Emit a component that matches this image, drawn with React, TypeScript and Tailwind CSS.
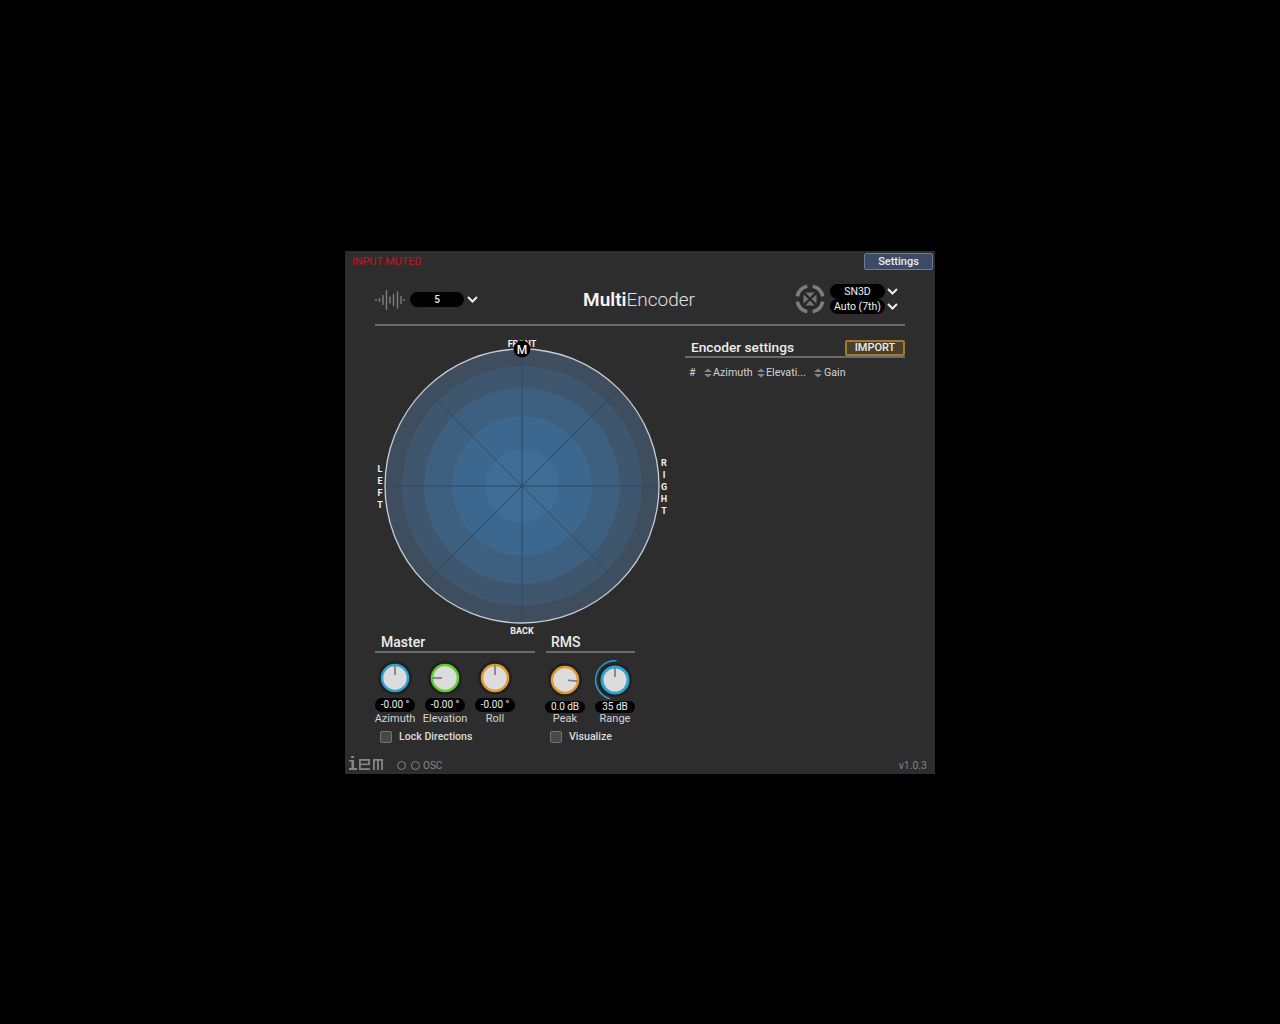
import React from "react";

function Chevron() {
  return (
    <svg width="11" height="7" viewBox="0 0 11 7" className="shrink-0">
      <path d="M1 1 L5.5 5.5 L10 1" fill="none" stroke="#ececec" strokeWidth="2" />
    </svg>
  );
}

function Knob({ color, angle, arc, stroke = 2.5 }: { color: string; angle: number; arc?: boolean; stroke?: number }) {
  const a = (angle * Math.PI) / 180;
  const s = Math.sin(a);
  const c = Math.cos(a);
  return (
    <svg width="40" height="40" viewBox="0 0 40 40" className="block">
      <circle cx="20" cy="20" r="16.8" fill="#202020" />
      {arc && <path d="M21.5 0.8 A19.3 19.3 0 0 0 15 38.7" fill="none" stroke="#2a9cc6" strokeWidth="1.5" />}
      <circle cx="20" cy="20" r="13" fill="#dcdcdc" stroke={color} strokeWidth={stroke} />
      <line x1={20 + s * 3} y1={20 - c * 3} x2={20 + s * 12.5} y2={20 - c * 12.5} stroke="#7c7c7c" strokeWidth="1.7" />
    </svg>
  );
}

function KnobCol({ color, angle, value, label, arc, low, stroke }: { color: string; angle: number; value: string; label: string; arc?: boolean; low?: boolean; stroke?: number }) {
  return (
    <div className="w-[50px] shrink-0 flex flex-col items-center">
      <div className={low ? "mt-[2px] h-[40px]" : "h-[40px]"}>
        <Knob color={color} angle={angle} arc={arc} stroke={stroke} />
      </div>
      <div className={(low ? "mt-[1px] h-[12px] leading-[12px] " : "h-[14px] leading-[14px] ") + "w-[40px] rounded-full bg-black text-[#f0f0f0] text-[10px] text-center whitespace-nowrap"}>
        {value}
      </div>
      <div className={(low ? "-mt-[1px] " : "") + "text-[11px] leading-[14px] text-[#d4d4d4] whitespace-nowrap"}>{label}</div>
    </div>
  );
}

function Check({ label, inset }: { label: string; inset: string }) {
  return (
    <div className={"flex items-center h-[14px] mt-[4px] " + inset}>
      <div className="-mt-[1px] w-[12px] h-[12px] rounded-[2px] bg-[#484848] border border-[#747474]" />
      <span className="ml-[7px] text-[10.6px] font-medium text-[#dcdcdc] whitespace-nowrap">{label}</span>
    </div>
  );
}

function Sort() {
  return (
    <svg width="8" height="10" viewBox="0 0 8 10" className="shrink-0">
      <path d="M0 4 L4 0.5 L8 4Z M0 6 L4 9.5 L8 6Z" fill="#858585" />
    </svg>
  );
}

function Sphere() {
  const cx = 147, cy = 151;
  const d = 137 * Math.SQRT1_2;
  const label = { fontSize: 9, fontWeight: 700, fill: "#f0f0f0", fontFamily: "Roboto, sans-serif", textAnchor: "middle" as const };
  const vert = (s: string, x: number, y0: number) =>
    s.split("").map((c, i) => (
      <text key={i} x={x} y={y0 + i * 12} {...label}>{c}</text>
    ));
  return (
    <svg width="300" height="300" viewBox="0 0 300 300" className="block">
      <circle cx={cx} cy={cy} r="137" fill="#3e4e5f" />
      <circle cx={cx} cy={cy} r="119" fill="#3e566e" stroke="#435b72" strokeWidth="1" />
      <circle cx={cx} cy={cy} r="97" fill="#3d5f80" stroke="#436584" strokeWidth="1" />
      <circle cx={cx} cy={cy} r="69" fill="#3c678e" stroke="#426c91" strokeWidth="1" />
      <circle cx={cx} cy={cy} r="36" fill="#3f6d95" stroke="#427097" strokeWidth="1" />
      <g stroke="#2a4a68" strokeWidth="1">
        <line x1={cx - 137} y1={cy} x2={cx + 137} y2={cy} />
        <line x1={cx} y1={cy - 137} x2={cx} y2={cy + 137} />
        <line x1={cx - d} y1={cy - d} x2={cx + d} y2={cy + d} />
        <line x1={cx - d} y1={cy + d} x2={cx + d} y2={cy - d} />
      </g>
      <circle cx={cx} cy={cy} r="137" fill="none" stroke="#c8ced3" strokeWidth="1.3" />
      <text x={cx} y="12" {...label}>FRONT</text>
      <text x={cx} y="299" {...label}>BACK</text>
      {vert("LEFT", 5, 137)}
      {vert("RIGHT", 289, 131)}
      <circle cx={cx} cy="14" r="8.5" fill="#000" />
      <text x={cx} y="18.5" textAnchor="middle" fontSize="12" fontWeight="500" fill="#f4f4f4" fontFamily="Roboto, sans-serif">M</text>
    </svg>
  );
}

function Wave() {
  const bars: [number, number][] = [[1, 2], [4.5, 4], [8, 10], [11.5, 20], [15, 7], [18.5, 12], [22.5, 17], [26, 8], [29, 2]];
  return (
    <svg width="35" height="24" viewBox="0 0 35 24" className="block">
      {bars.map(([x, h]) => (
        <line key={x} x1={x} x2={x} y1={12 - h / 2} y2={12 + h / 2} stroke="#7e7e7e" strokeWidth="1.4" />
      ))}
    </svg>
  );
}

function AmbiLogo() {
  const R = 13;
  const arc = (mid: number) => {
    const a0 = ((mid - 33) * Math.PI) / 180;
    const a1 = ((mid + 33) * Math.PI) / 180;
    return `M${16 + R * Math.sin(a0)} ${16 - R * Math.cos(a0)} A${R} ${R} 0 0 1 ${16 + R * Math.sin(a1)} ${16 - R * Math.cos(a1)}`;
  };
  return (
    <svg width="32" height="32" viewBox="0 0 32 32" className="block">
      <circle cx="16" cy="16" r="10.5" fill="#282828" />
      <g fill="none" stroke="#7c7c7c" strokeWidth="3.6">
        <path d={arc(45)} />
        <path d={arc(135)} />
        <path d={arc(225)} />
        <path d={arc(315)} />
      </g>
      <g fill="#747474">
        <path d="M11.5 9.5 L20.5 9.5 L16 14.5Z" />
        <path d="M11.5 22.5 L20.5 22.5 L16 17.5Z" />
        <path d="M9.5 11.5 L9.5 20.5 L14.5 16Z" />
        <path d="M22.5 11.5 L22.5 20.5 L17.5 16Z" />
      </g>
    </svg>
  );
}

function IemLogo() {
  return (
    <svg width="36" height="16" viewBox="0 0 36 16" className="block">
      <g fill="#858585">
        <rect x="3" y="1" width="3" height="2" />
        <rect x="1" y="5" width="5" height="1.5" />
        <rect x="3.5" y="5" width="2.5" height="8" />
        <rect x="1" y="13" width="8" height="2" />
        <rect x="11" y="4" width="11" height="1.8" />
        <rect x="11" y="4" width="1.8" height="11" />
        <rect x="20.2" y="4" width="1.8" height="6" />
        <rect x="11" y="8.5" width="11" height="1.6" />
        <rect x="11" y="13.2" width="11" height="1.8" />
        <rect x="25" y="4" width="10" height="1.8" />
        <rect x="25" y="4" width="1.8" height="11" />
        <rect x="29.1" y="4" width="1.8" height="11" />
        <rect x="33.2" y="4" width="1.8" height="11" />
      </g>
    </svg>
  );
}

function Ring() {
  return <div className="w-[9px] h-[9px] rounded-full border border-[#858585]" />;
}

export default function App() {
  return (
    <div className="w-[1280px] h-[1024px] bg-black pl-[345px] pt-[251px]" style={{ fontFamily: "Roboto, 'Liberation Sans', sans-serif" }}>
      <div className="w-[590px] h-[523px] bg-[#2d2d2d] flex flex-col">
        {/* top bar */}
        <div className="h-[20px] flex items-start justify-between pl-[7px] pr-[2px]">
          <span className="mt-[4px] text-[10.8px] leading-[14px] text-[#d0101c] whitespace-nowrap">INPUT MUTED</span>
          <button className="mt-[2px] w-[69px] h-[17px] rounded-[2px] bg-[#3c4a66] border border-[#6d7c9b] text-[11px] leading-[15px] font-medium text-[#ececec]">Settings</button>
        </div>

        {/* title row */}
        <div className="mx-[30px] mt-[12px] h-[43px] pb-[8px] border-b-2 border-[#6a6a6a] flex items-center">
          <Wave />
          <div className="w-[54px] h-[15px] rounded-full bg-black text-[#f0f0f0] text-[10px] font-medium leading-[15px] text-center">5</div>
          <div className="ml-[3px]"><Chevron /></div>
          <div className="flex-1 text-center text-[19px] leading-[24px] text-[#e0e0e0] pl-[5px] font-light">
            <span className="font-semibold text-[#f5f5f5]">Multi</span>Encoder
          </div>
          <div className="-ml-[1px] -mt-[1px]"><AmbiLogo /></div>
          <div className="ml-[4px] -mt-[1px] flex flex-col">
            <div className="flex items-center">
              <div className="w-[55px] h-[15px] rounded-full bg-black text-[#f0f0f0] text-[10.5px] leading-[15px] text-center">SN3D</div>
              <div className="ml-[2px]"><Chevron /></div>
            </div>
            <div className="flex items-center">
              <div className="w-[55px] h-[15px] rounded-full bg-black text-[#f0f0f0] text-[10.5px] leading-[15px] text-center whitespace-nowrap">Auto (7th)</div>
              <div className="ml-[2px]"><Chevron /></div>
            </div>
          </div>
          <div className="w-[7px]" />
        </div>

        {/* body */}
        <div className="flex pl-[30px] mt-[9px]">
          <div className="w-[310px]">
            <Sphere />
            <div className="flex gap-[11px]">
              <div className="w-[160px]">
                <div className="h-[18px] border-b-2 border-[#6a6a6a] pl-[6px] text-[14px] leading-[14px] font-medium text-[#ececec]">Master</div>
                <div className="flex -ml-[5px] mt-[5px]">
                  <KnobCol color="#2ea5cf" angle={0} value="-0.00 °" label="Azimuth" />
                  <KnobCol color="#5fd02e" angle={-90} value="-0.00 °" label="Elevation" />
                  <KnobCol color="#e09a30" angle={0} value="-0.00 °" label="Roll" />
                </div>
                <Check label="Lock Directions" inset="ml-[5px]" />
              </div>
              <div className="w-[89px]">
                <div className="h-[18px] border-b-2 border-[#6a6a6a] pl-[5px] text-[14px] leading-[14px] font-medium text-[#ececec]">RMS</div>
                <div className="flex -ml-[6px] mt-[5px]">
                  <KnobCol low color="#e09a30" angle={95} value="0.0 dB" label="Peak" />
                  <KnobCol low color="#2ea5cf" angle={0} value="35 dB" label="Range" arc stroke={3} />
                </div>
                <Check label="Visualize" inset="ml-[4px]" />
              </div>
            </div>
          </div>
          <div className="w-[220px]">
            <div className="h-[23px] border-b-2 border-[#6a6a6a] flex items-center justify-between pl-[6px]">
              <span className="mt-[3px] text-[13.7px] leading-[16px] font-medium text-[#ececec] whitespace-nowrap">Encoder settings</span>
              <button className="mt-[4px] w-[60px] h-[16px] rounded-[2px] bg-[#4a3e2c] border-2 border-[#a07a30] text-[11px] leading-[12px] font-medium text-[#ececec]">IMPORT</button>
            </div>
            <div className="mt-[8px] flex items-center text-[10.7px] leading-[14px] text-[#d4d4d4] whitespace-nowrap">
              <span className="ml-[4px] w-[15px]">#</span>
              <Sort /><span className="ml-[1px] w-[44px]">Azimuth</span>
              <Sort /><span className="ml-[1px] w-[48px]">Elevati...</span>
              <Sort /><span className="ml-[2px]">Gain</span>
            </div>
          </div>
        </div>

        {/* footer */}
        <div className="mt-auto h-[20px] flex items-center pl-[3px] pr-[8px]">
          <div className="-mt-[3px]"><IemLogo /></div>
          <div className="ml-[13px] mt-[2px]"><Ring /></div>
          <div className="ml-[5px] mt-[2px]"><Ring /></div>
          <span className="ml-[3px] mt-[3px] text-[10px] leading-[12px] text-[#858585]">OSC</span>
          <span className="ml-auto mt-[3px] text-[10.5px] leading-[12px] text-[#858585]">v1.0.3</span>
        </div>
      </div>
    </div>
  );
}
